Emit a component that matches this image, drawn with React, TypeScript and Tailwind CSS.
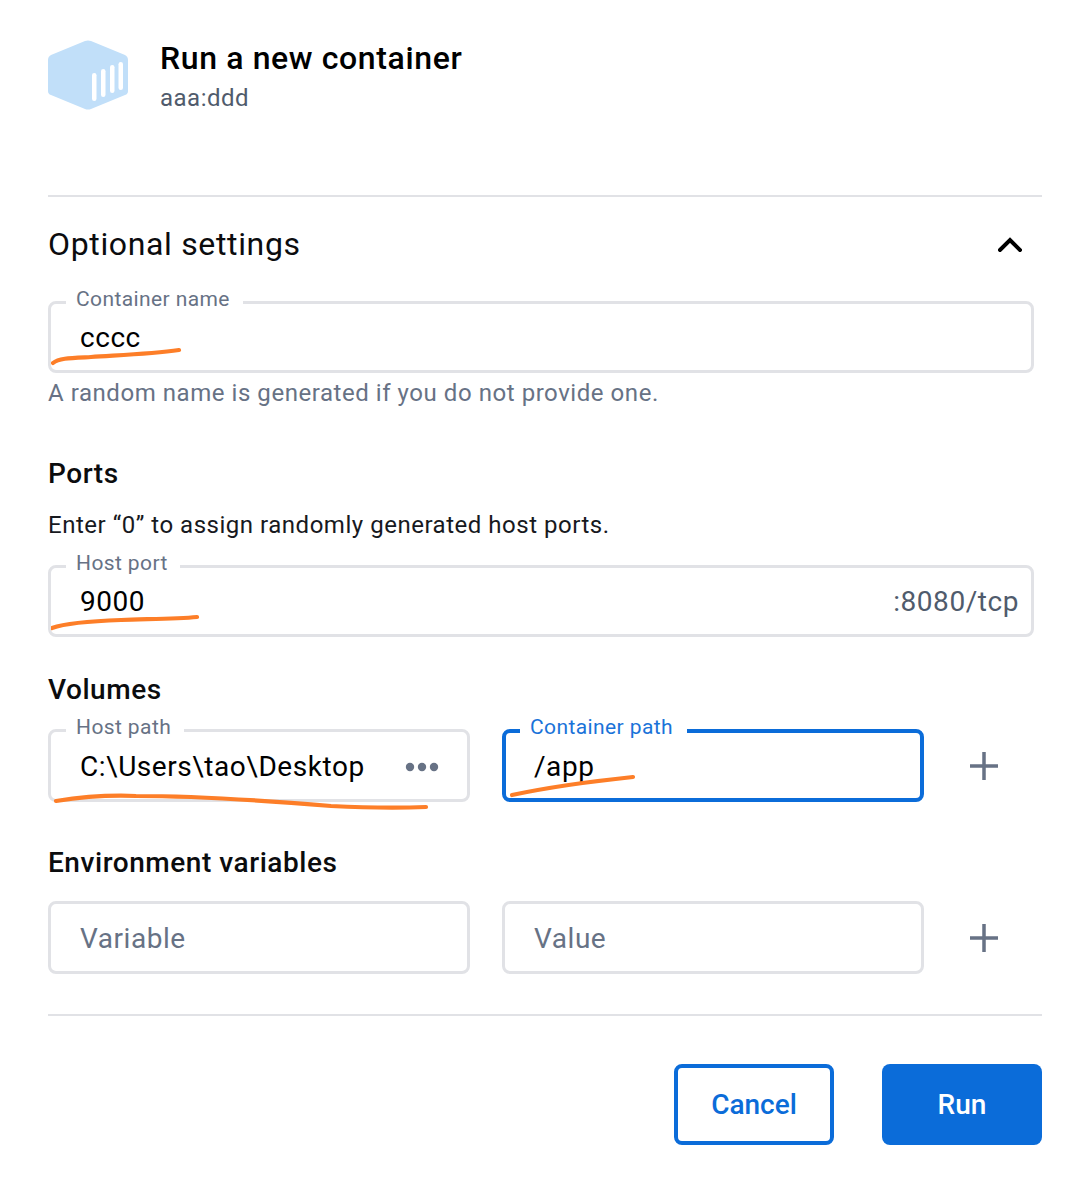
import React from "react";

const font = { fontFamily: "Roboto, sans-serif" };

function Field({ label, value, focused, width, height, placeholder, suffix, dots, scribble, labelClass, textClass }: {
  label?: string; value?: string; focused?: boolean; width: string; height: string; placeholder?: string; suffix?: string; dots?: boolean; scribble?: React.ReactNode; labelClass?: string; textClass?: string;
}) {
  return (
    <div className={`relative rounded-lg bg-white ${height} ${focused ? "border-4 border-[#0b6cd9]" : "border-[3px] border-[#e1e2e6]"} ${width}`}>
      {label && (
        <span className={`absolute ${focused ? "left-[14px] top-[-20px]" : "left-[15px] top-[-19px]"} bg-white pl-[10px] text-[21px] leading-[28px] tracking-[0.4px] whitespace-nowrap ${focused ? "text-[#1a73d9]" : "text-[#677285]"} ${labelClass ?? ""}`}>
          {label}
        </span>
      )}
      <div className={`flex h-full items-center ${textClass ?? "pt-px"} ${focused ? "pl-[28px]" : "pl-[29px]"} pr-3`}>
        {value && <span className="text-[28px] tracking-[0.55px] text-black leading-none">{value}</span>}
        {placeholder && <span className="text-[28px] tracking-[0.55px] text-[#677285] leading-none">{placeholder}</span>}
        {suffix && <span className="ml-auto text-[28px] tracking-[0.55px] text-[#505b6c] leading-none">{suffix}</span>}
        {dots && (
          <svg className="ml-auto mr-4" width="34" height="12" viewBox="0 0 34 12" fill="#677285">
            <circle cx="5" cy="6" r="4.2" /><circle cx="17" cy="6" r="4.2" /><circle cx="29" cy="6" r="4.2" />
          </svg>
        )}
      </div>
      {scribble}
    </div>
  );
}

function Plus() {
  return (
    <svg width="28" height="28" viewBox="0 0 28 28" className="ml-[46px] shrink-0" fill="#677285">
      <rect x="0" y="12.25" width="28" height="3.5" /><rect x="12.25" y="0" width="3.5" height="28" />
    </svg>
  );
}

function Scribble({ className, w, h, d }: { className: string; w: number; h: number; d: string }) {
  return (
    <svg className={`absolute pointer-events-none ${className}`} width={w} height={h} viewBox={`0 0 ${w} ${h}`} fill="none">
      <path d={d} stroke="#fd7e28" strokeWidth="4.2" strokeLinecap="round" strokeLinejoin="round" />
    </svg>
  );
}

export default function App() {
  return (
    <div className="w-[1075px] h-[1184px] bg-white pl-12 pr-[33px] pt-10 overflow-hidden" style={font}>
      <div className="flex items-start">
        <svg width="80" height="70" viewBox="0 0 80 70">
          <path d="M37 1 Q40 -0.2 43 1 L77 15 Q80 16.5 80 20 L80 51 Q80 54 77 55 L43 69 Q40 70.2 37 69 L3 55 Q0 54 0 51 L0 20 Q0 16.5 3 15 Z" fill="#c1dff9" />
          <rect x="44" y="33" width="4.5" height="28" rx="2.25" fill="#fff" />
          <rect x="53" y="29" width="4.5" height="28" rx="2.25" fill="#fff" />
          <rect x="62" y="25" width="4.5" height="28" rx="2.25" fill="#fff" />
          <rect x="70.5" y="22" width="4.5" height="28" rx="2.25" fill="#fff" />
        </svg>
        <div className="ml-8 -mt-px">
          <div className="text-[32px] leading-[38px] font-medium text-black tracking-[0.62px]">Run a new container</div>
          <div className="mt-[5px] text-[24px] leading-[32px] text-[#505b6c] tracking-[0.5px]">aaa:ddd</div>
        </div>
      </div>

      <div className="mt-[81px] h-[2px] bg-[#e1e2e6]" />

      <div className="mt-[27px] flex items-center justify-between pr-5">
        <span className="text-[32px] leading-[40px] text-[#0b0c0e] tracking-[0.65px]">Optional settings</span>
        <svg width="24" height="16" viewBox="0 0 24 16" fill="none">
          <path d="M2 14 L12 4 L22 14" stroke="#000" strokeWidth="4" strokeLinecap="square" />
        </svg>
      </div>

      <div className="mt-[37px]">
        <Field label="Container name" value="cccc" width="w-[986px]" height="h-[72px]" labelClass="pr-[13px]"
          scribble={<Scribble className="left-0 top-[39px]" w={136} h={26} d="M2 20 C8 15 20 15 40 14 C70 12 100 11 128 7" />} />
      </div>
      <div className="mt-[6px] text-[24px] leading-[28px] text-[#677285] tracking-[0.55px]">A random name is generated if you do not provide one.</div>

      <div className="mt-[51px] text-[28px] leading-[32px] font-medium text-[#0b0c0e] tracking-[0.55px]">Ports</div>
      <div className="mt-[21px] text-[24px] leading-[28px] text-[#17191e] tracking-[0.52px]">Enter “0” to assign randomly generated host ports.</div>

      <div className="mt-[26px]">
        <Field label="Host port" value="9000" suffix=":8080/tcp" width="w-[986px]" height="h-[72px]" labelClass="pr-3"
          scribble={<Scribble className="left-0 top-[40px]" w={152} h={26} d="M1 20 C15 15 40 13 70 12 C95 11 125 11 146 9" />} />
      </div>

      <div className="mt-[37px] text-[28px] leading-[32px] font-medium text-[#0b0c0e] tracking-[0.55px]">Volumes</div>

      <div className="mt-[23px] flex items-center">
        <Field label="Host path" value="C:\Users\tao\Desktop" dots width="w-[422px]" height="h-[73px]" labelClass="pr-[13px]" textClass="pt-[3px]"
          scribble={<Scribble className="left-0 top-[50px]" w={384} h={30} d="M5 19 C30 15 60 13 85 14 C150 14 220 19 280 24 C320 26 350 26 375 25" />} />
        <div className="ml-[32px]">
          <Field label="Container path" value="/app" focused width="w-[422px]" height="h-[73px]" labelClass="pr-[14px]" textClass="pt-[3px]"
            scribble={<Scribble className="left-[-1px] top-[29px]" w={136} h={36} d="M7 33 C40 26 80 20 128 15" />} />
        </div>
        <Plus />
      </div>

      <div className="mt-[45px] text-[28px] leading-[32px] font-medium text-[#0b0c0e] tracking-[0.55px]">Environment variables</div>

      <div className="mt-[22px] flex items-center">
        <Field placeholder="Variable" width="w-[422px]" height="h-[73px]" textClass="pt-[3px]" />
        <div className="ml-[32px]"><Field placeholder="Value" width="w-[422px]" height="h-[73px]" textClass="pt-[3px]" /></div>
        <Plus />
      </div>

      <div className="mt-[40px] h-[2px] bg-[#e1e2e6]" />

      <div className="mt-[48px] flex justify-end gap-[48px]">
        <button className="h-[81px] w-[160px] rounded-lg border-4 border-[#0b6cd9] bg-white text-[28px] font-medium text-[#0b6cd9]">Cancel</button>
        <button className="h-[81px] w-[160px] rounded-lg bg-[#0b6cd9] text-[28px] font-medium text-white">Run</button>
      </div>
    </div>
  );
}
